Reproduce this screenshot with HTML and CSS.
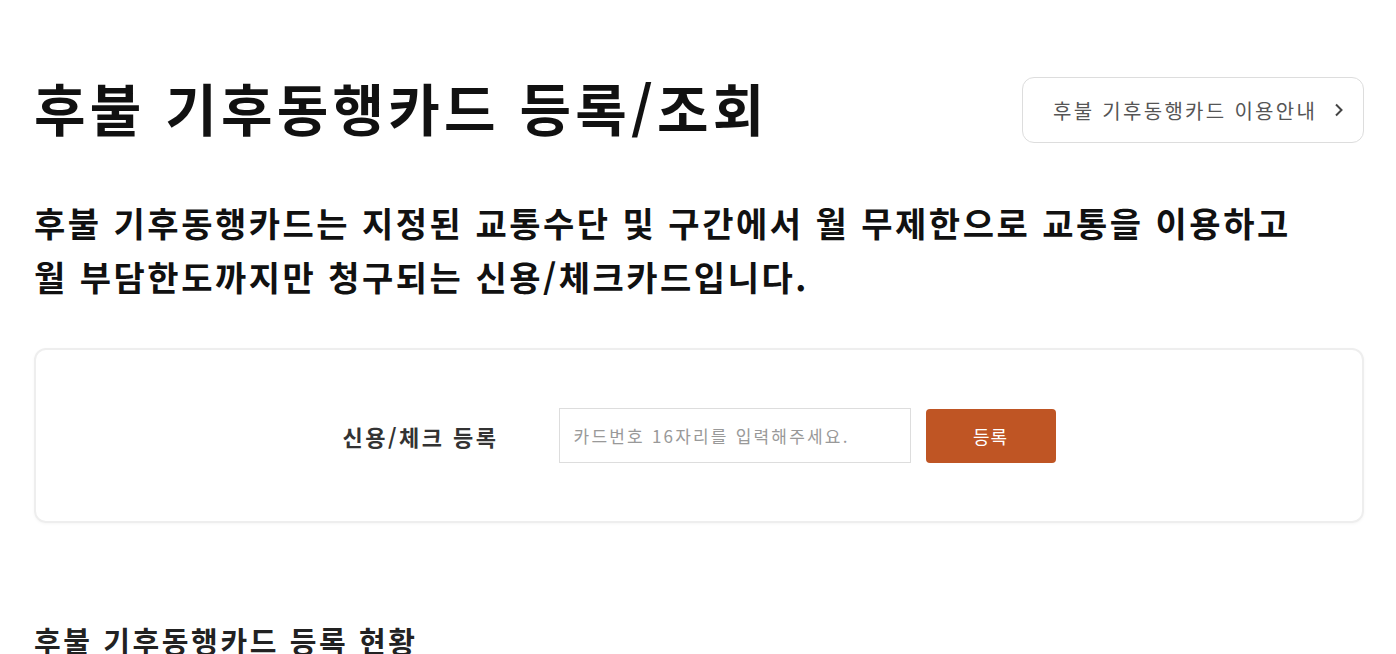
FILE: index.html
```html
<!DOCTYPE html>
<html lang="ko">
<head>
    <meta charset="UTF-8">
    <meta name="viewport" content="width=device-width, initial-scale=1.0">
    <title>후불 기후동행카드 등록/조회</title>
    <link rel="stylesheet" href="styles.css">
</head>
<body>

    <div class="page">
        <!-- 상단 제목 -->
        <div class="page-head">
            <h1>후불 기후동행카드 등록/조회</h1>
            <a class="guide-link" href="#">
                <span>후불 기후동행카드 이용안내</span>
                <svg width="12" height="16" viewBox="0 0 12 16" aria-hidden="true">
                    <path d="M3 2.5 L8.5 8 L3 13.5" fill="none" stroke="#444" stroke-width="2"/>
                </svg>
            </a>
        </div>

        <p class="intro">
            후불 기후동행카드는 지정된 교통수단 및 구간에서 월 무제한으로 교통을 이용하고<br>
            월 부담한도까지만 청구되는 신용/체크카드입니다.
        </p>

        <!-- 카드 등록 -->
        <form class="register-box">
            <label for="card-no">신용/체크 등록</label>
            <input type="text" id="card-no" placeholder="카드번호 16자리를 입력해주세요.">
            <button type="submit">등록</button>
        </form>

        <h2 class="section-title">후불 기후동행카드 등록 현황</h2>
    </div>

</body>
</html>
```

FILE: styles.css
```css
:root {
    --black: #111;
    --text: #333;
    --gray: #999;
    --line: #e6e6e6;
    --orange: #bf5524;
}

* {
    margin: 0;
    padding: 0;
    box-sizing: border-box;
    font-family: "Noto Sans CJK KR", "Noto Sans", sans-serif;
}

body {
    background: #fff;
    color: var(--black);
}

.page {
    padding: 70px 32px 0 34px;
}

.page-head {
    display: flex;
    justify-content: space-between;
    align-items: center;
}

.page-head h1 {
    font-size: 56px;
    font-weight: 700;
    line-height: 66px;
    letter-spacing: 4.2px;
}

.guide-link {
    display: flex;
    align-items: center;
    gap: 16px;
    width: 342px;
    height: 66px;
    padding-left: 30px;
    border: 1px solid #ddd;
    border-radius: 12px;
    color: #555;
    font-size: 20px;
    text-decoration: none;
    white-space: nowrap;
    margin-top: 7px;
}

.guide-link span {
    letter-spacing: 2.3px;
}

.intro {
    margin-top: 53px;
    font-size: 34px;
    font-weight: 700;
    line-height: 54px;
    letter-spacing: 2.5px;
}

.register-box {
    display: flex;
    justify-content: center;
    align-items: center;
    height: 175px;
    margin-top: 44px;
    border: 2px solid #eee;
    border-radius: 12px;
    box-shadow: 0 1px 3px rgba(0, 0, 0, 0.04);
}

.register-box label {
    font-size: 22px;
    font-weight: 700;
    color: var(--text);
    letter-spacing: 2.5px;
    margin-right: 60px;
}

.register-box input {
    width: 352px;
    height: 55px;
    padding: 0 14px;
    border: 1px solid #ddd;
    font-size: 17px;
    letter-spacing: 2.2px;
    color: var(--text);
}

.register-box input::placeholder {
    color: var(--gray);
}

.register-box button {
    width: 130px;
    height: 54px;
    margin-left: 15px;
    background-color: var(--orange);
    color: #fff;
    border: none;
    border-radius: 4px;
    font-size: 18px;
    letter-spacing: 1px;
    cursor: pointer;
}

.section-title {
    margin-top: 96px;
    font-size: 29px;
    font-weight: 700;
    letter-spacing: 2.6px;
    color: #222;
}
```
